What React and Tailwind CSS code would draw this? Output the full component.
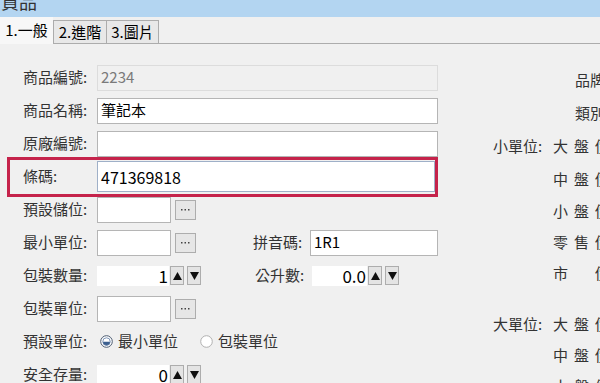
import React from "react";

const FONT = { fontFamily: '"Microsoft JhengHei", "Noto Sans CJK TC", "Noto Sans", sans-serif' };

const Label = ({ children, className = "" }) => (
  <span className={`w-[74px] shrink-0 text-[15px] text-[#333] whitespace-nowrap ${className}`}>{children}</span>
);

const TextBox = ({ value, className = "", disabled = false }) => (
  <div
    className={`h-[26px] flex items-center px-[3px] border text-[15px] whitespace-nowrap ${
      disabled ? "bg-[#f0f0f0] border-[#dcdcdc] text-[#7a7a7a]" : "bg-white border-[#b5b5b5] text-black"
    } ${className}`}
  >
    {value}
  </div>
);

const Browse = () => (
  <div className="ml-[4px] w-[21px] h-[20px] border border-[#adadad] bg-[#e6e6e6] flex items-center justify-center">
    <svg width="9" height="3" viewBox="0 0 9 3">
      <rect x="0" y="1" width="1.5" height="1.5" fill="#444" />
      <rect x="3.5" y="1" width="1.5" height="1.5" fill="#444" />
      <rect x="7" y="1" width="1.5" height="1.5" fill="#444" />
    </svg>
  </div>
);

const Arrow = ({ down }) => (
  <div className="w-[14px] h-[19px] border border-[#adadad] bg-[#e4e4e4] flex items-center justify-center">
    <svg width="9" height="8" viewBox="0 0 9 8">
      {down ? <polygon points="0,0 9,0 4.5,8" fill="#111" /> : <polygon points="0,8 9,8 4.5,0" fill="#111" />}
    </svg>
  </div>
);

const Spinner = ({ value, width }) => (
  <div className="flex items-center">
    <div className={`${width} h-[20px] bg-white flex items-center justify-end text-[17px] text-black pr-[1px]`}>
      {value}
    </div>
    <div className="ml-[1px] flex gap-[3px]">
      <Arrow />
      <Arrow down />
    </div>
  </div>
);

const Radio = ({ checked, label }) => (
  <div className="flex items-center gap-[5px]">
    <svg width="13" height="13" viewBox="0 0 13 13">
      <circle cx="6.5" cy="6.5" r="5.8" fill="#fff" stroke={checked ? "#4a5a70" : "#b0b0b0"} strokeWidth="1" />
      {checked && <path d="M2.8 6.8 A3.7 3.7 0 0 0 10.2 6.8 Z" fill="#3c5f8e" />}
      {checked && <circle cx="6.5" cy="6.5" r="3.7" fill="none" stroke="#5d7aa3" strokeWidth="0.8" />}
    </svg>
    <span className="text-[15px] text-[#333]">{label}</span>
  </div>
);

const Row = ({ children, className = "" }) => (
  <div className={`h-[33px] flex items-center ${className}`}>{children}</div>
);

const PriceRow = ({ head, text, h = "h-[33px]" }) => (
  <div className={`${h} flex items-center whitespace-nowrap text-[15px] text-[#333]`}>
    <span className="w-[60px] shrink-0">{head}</span>
    <span className="tracking-[6px]">{text}</span>
  </div>
);

export default function App() {
  return (
    <div className="w-[600px] h-[383px] overflow-hidden bg-[#f0f0f0] flex flex-col" style={FONT}>
      {/* title bar */}
      <div className="h-[17px] shrink-0 bg-[#b3d5f1] overflow-hidden">
        <div className="mt-[-11px] ml-[1px] text-[18px] leading-[24px] text-[#333]">貨品</div>
      </div>

      {/* tabs */}
      <div className="h-[27px] shrink-0 flex items-end bg-[#f0f0f0]">
        <div className="w-[53px] h-[27px] bg-[#f7f7f7] flex items-center justify-center text-[15px] text-black">1.一般</div>
        <div className="w-[54px] h-[24px] bg-[#e8e8e8] border border-[#acacac] flex items-center justify-center text-[15px] text-black">2.進階</div>
        <div className="w-[52px] h-[24px] bg-[#e8e8e8] border border-l-0 border-[#acacac] flex items-center justify-center text-[15px] text-black">3.圖片</div>
        <div className="flex-1 border-b border-[#acacac]" />
      </div>

      {/* content */}
      <div className="flex-1 flex">
        <div className="w-[440px] shrink-0 pl-[23px] pt-[17px] flex flex-col">
          <Row>
            <Label>商品編號:</Label>
            <TextBox value="2234" disabled className="w-[341px]" />
          </Row>
          <Row>
            <Label>商品名稱:</Label>
            <TextBox value="筆記本" className="w-[341px]" />
          </Row>
          <Row>
            <Label>原廠編號:</Label>
            <TextBox value="" className="w-[341px]" />
          </Row>
          <Row className="relative">
            <div className="absolute left-[-16px] top-[-3px] w-[431px] h-[40px] border-[3px] border-[#c5234b]" />
            <Label>條碼:</Label>
            <TextBox value="471369818" className="w-[338px] h-[31px] !border-[#9fb0c8] text-[16px]" />
          </Row>
          <Row>
            <Label>預設儲位:</Label>
            <TextBox value="" className="w-[74px]" />
            <Browse />
          </Row>
          <Row>
            <Label>最小單位:</Label>
            <TextBox value="" className="w-[74px]" />
            <Browse />
            <span className="ml-[57px] w-[57px] text-[15px] text-[#333] whitespace-nowrap">拼音碼:</span>
            <TextBox value="1R1" className="w-[128px]" />
          </Row>
          <Row>
            <Label className="w-[72px]">包裝數量:</Label>
            <Spinner value="1" width="w-[72px]" />
            <span className="ml-[54px] w-[57px] text-[15px] text-[#333] whitespace-nowrap">公升數:</span>
            <Spinner value="0.0" width="w-[55px]" />
          </Row>
          <Row>
            <Label>包裝單位:</Label>
            <TextBox value="" className="w-[74px]" />
            <Browse />
          </Row>
          <Row>
            <Label className="w-[77px]">預設單位:</Label>
            <Radio checked label="最小單位" />
            <div className="ml-[22px]">
              <Radio label="包裝單位" />
            </div>
          </Row>
          <Row>
            <Label className="w-[72px]">安全存量:</Label>
            <Spinner value="0" width="w-[72px]" />
          </Row>
        </div>

        <div className="pl-[53px] pt-[20px] flex flex-col">
          <div className="h-[33px] flex items-center pl-[82px] text-[15px] text-[#333] whitespace-nowrap">品牌:</div>
          <div className="h-[33px] flex items-center pl-[82px] text-[15px] text-[#333] whitespace-nowrap">類別:</div>
          <PriceRow head="小單位:" text="大盤價:" />
          <PriceRow head="" text="中盤價:" />
          <PriceRow head="" text="小盤價:" h="h-[31px]" />
          <PriceRow head="" text="零售價:" h="h-[31px]" />
          <PriceRow head="" text="市　價:" h="h-[31px]" />
          <div className="h-[20px]" />
          <PriceRow head="大單位:" text="大盤價:" h="h-[31px]" />
          <PriceRow head="" text="中盤價:" h="h-[31px]" />
          <PriceRow head="" text="小盤價:" h="h-[31px]" />
        </div>
      </div>
    </div>
  );
}
